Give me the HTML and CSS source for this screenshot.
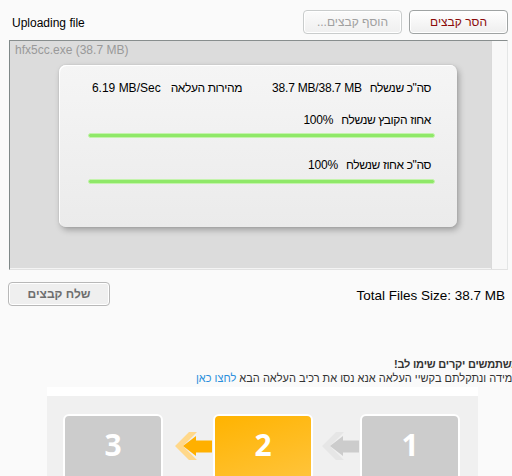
FILE: index.html
```html
<!DOCTYPE html>
<html lang="he">
<head>
<meta charset="utf-8">
<title>Uploading file</title>
<link rel="stylesheet" href="styles.css">
</head>
<body>
<div class="page">
  <div class="header">
    <div class="title">Uploading file</div>
    <div class="actions">
      <button class="btn btn-disabled" dir="rtl">הוסף קבצים...</button>
      <button class="btn btn-remove" dir="rtl">הסר קבצים</button>
    </div>
  </div>

  <div class="filebox">
    <div class="list">
      <div class="fileitem">hfx5cc.exe (38.7 MB)</div>
      <div class="dialog">
        <div class="stat-row">
          <span class="lbl">סה&quot;כ שנשלח</span><span class="val">38.7 MB/38.7 MB</span>
          <span class="lbl lbl-2">מהירות העלאה</span><span class="val val-2">6.19 MB/Sec</span>
        </div>
        <div class="stat-row row-2">
          <span class="lbl">אחוז הקובץ שנשלח</span><span class="val">100%</span>
        </div>
        <div class="bar"></div>
        <div class="stat-row row-3">
          <span class="lbl">סה&quot;כ אחוז שנשלח</span><span class="val">100%</span>
        </div>
        <div class="bar bar-2"></div>
      </div>
    </div>
    <div class="scroll"></div>
  </div>

  <div class="footer-row">
    <button class="btn btn-send" dir="rtl">שלח קבצים</button>
    <div class="total">Total Files Size: 38.7 MB</div>
  </div>

  <div class="notice" dir="rtl">
    <div class="notice-title">משתמשים יקרים שימו לב!</div>
    <div class="notice-text">במידה ונתקלתם בקשיי העלאה אנא נסו את רכיב העלאה הבא <a href="#" class="notice-link">לחצו כאן</a></div>
  </div>

  <div class="steps-wrap">
    <div class="steps">
      <div class="step">3</div>
      <div class="arrow-cell arrow-cell-a">
        <svg class="arrow" width="38" height="28" viewBox="0 0 38 28">
          <polygon points="0,14 14,0 22,0 8,14 22,28 14,28" fill="#ffd88a"/>
          <polygon points="8,14 21,4 21,8.5 37,8.5 37,20.5 21,20.5 21,24" fill="#ffb000"/>
        </svg>
      </div>
      <div class="step step-active">2</div>
      <div class="arrow-cell arrow-cell-b">
        <svg class="arrow" width="38" height="28" viewBox="0 0 38 28">
          <polygon points="0,14 14,0 22,0 8,14 22,28 14,28" fill="#e6e6e6"/>
          <polygon points="8,14 21,4 21,8.5 37,8.5 37,20.5 21,20.5 21,24" fill="#cccccc"/>
        </svg>
      </div>
      <div class="step">1</div>
    </div>
  </div>
</div>
</body>
</html>
```

FILE: styles.css
```css
html, body {
  margin: 0;
  padding: 0;
  overflow: hidden;
  background: #fafafa;
}

body {
  font-family: "Liberation Sans", Arial, sans-serif;
  font-size: 12px;
  color: #000;
}

.page {
  padding: 10px 4px 0 9px;
  width: 499px;
}

/* header */
.header {
  display: flex;
  align-items: center;
  justify-content: space-between;
  height: 24px;
}

.title {
  padding-left: 3px;
  font-size: 12px;
  line-height: 14px;
  padding-top: 2px;
}

.actions {
  display: flex;
  gap: 7px;
}

.btn {
  font-family: "Liberation Sans", Arial, sans-serif;
  font-size: 12px;
  width: 99px;
  height: 24px;
  padding: 0;
  border: 1px solid #9fa3a3;
  border-radius: 4px;
  background: linear-gradient(#ffffff, #eeeeee);
  box-shadow: inset 0 0 0 1px #ffffff;
  color: #000;
}

.btn-remove {
  color: #8b0a0a;
}

.btn-disabled {
  color: #a0a0a0;
  border-color: #c9cccc;
  background: linear-gradient(#fbfbfb, #efefef);
}

/* file list */
.filebox {
  margin-top: 6px;
  height: 228px;
  display: flex;
  border-top: 1px solid #888e8e;
  border-left: 1px solid #7f8888;
  border-bottom: 1px solid #e2e2e2;
  border-right: 1px solid #e4e6e6;
}

.list {
  position: relative;
  flex: 1;
  background: #dcdcdc;
  border-bottom: 1px solid #f4f4f4;
}

.fileitem {
  padding: 2px 5px;
  line-height: 14px;
  color: #999;
}

.scroll {
  width: 15px;
  background: #f8f8f8;
  border-left: 1px solid #dadada;
}

.dialog {
  position: absolute;
  left: 49px;
  top: 24px;
  width: 398px;
  height: 162px;
  box-sizing: border-box;
  padding-top: 16px;
  border-radius: 7px;
  background: linear-gradient(#f5f5f5, #ebebeb);
  box-shadow: inset 1px 1px 0 #ffffff, 2px 3px 6px rgba(0, 0, 0, 0.28), 0 0 2px rgba(0, 0, 0, 0.12);
}

.stat-row {
  display: flex;
  direction: rtl;
  padding-right: 26px;
  line-height: 14px;
  font-size: 12px;
  white-space: nowrap;
}

.lbl {
  letter-spacing: -0.4px;
}

.row-2 {
  margin-top: 18px;
}

.row-3 {
  margin-top: 20px;
}

.val {
  direction: ltr;
  unicode-bidi: isolate;
  margin-right: 8px;
  letter-spacing: -0.2px;
}

.val-2 {
  margin-right: 10px;
  letter-spacing: 0;
}

.lbl-2 {
  margin-right: 30px;
}

.bar {
  margin: 6px 22px 0 29px;
  height: 3px;
  border: 1px solid #c4f3ac;
  border-radius: 3px;
  background: #8fe868;
}

.bar-2 {
  margin-top: 7px;
}

/* footer */
.footer-row {
  margin-top: 12px;
  display: flex;
  align-items: center;
  justify-content: space-between;
  height: 24px;
}

.btn-send {
  width: 102px;
  margin-left: -1px;
  font-weight: bold;
  color: #6e6e6e;
  border-color: #b8b8b8;
  background: #efefef;
}

.total {
  margin-right: 3px;
  font-size: 13.5px;
  line-height: 15px;
  padding-top: 2px;
}

/* notice */
.notice {
  margin-top: 51px;
  margin-right: -11px;
  color: #333;
  font-size: 11px;
  line-height: 14px;
  white-space: nowrap;
  text-align: right;
}

.notice-title {
  font-weight: bold;
  letter-spacing: -0.2px;
}

.notice-link {
  color: #2b8fdc;
  text-decoration: none;
}

/* steps */
.steps-wrap {
  margin: 2px 0 0 38px;
  width: 431px;
  padding-top: 9px;
  background: #ffffff;
}

.steps {
  display: flex;
  background: #f0f0f0;
  padding: 18px 18px 20px 16px;
}

.step {
  width: 96px;
  height: 80px;
  border: 2px solid #ffffff;
  border-radius: 6px;
  background: #cccccc;
  color: #ffffff;
  font-family: "Open Sans", "DejaVu Sans", sans-serif;
  font-weight: bold;
  font-size: 30px;
  line-height: 36px;
  padding-top: 11px;
  box-sizing: content-box;
  text-align: center;
}

.step-active {
  background: linear-gradient(160deg, #ffb300, #ffc94d);
}

.arrow-cell {
  display: flex;
  align-items: flex-start;
  padding-top: 18px;
}

.arrow-cell-a {
  width: 50px;
  justify-content: flex-end;
}

.arrow-cell-b {
  width: 47px;
  padding-left: 9px;
  box-sizing: border-box;
}

.arrow {
  display: block;
}
```
